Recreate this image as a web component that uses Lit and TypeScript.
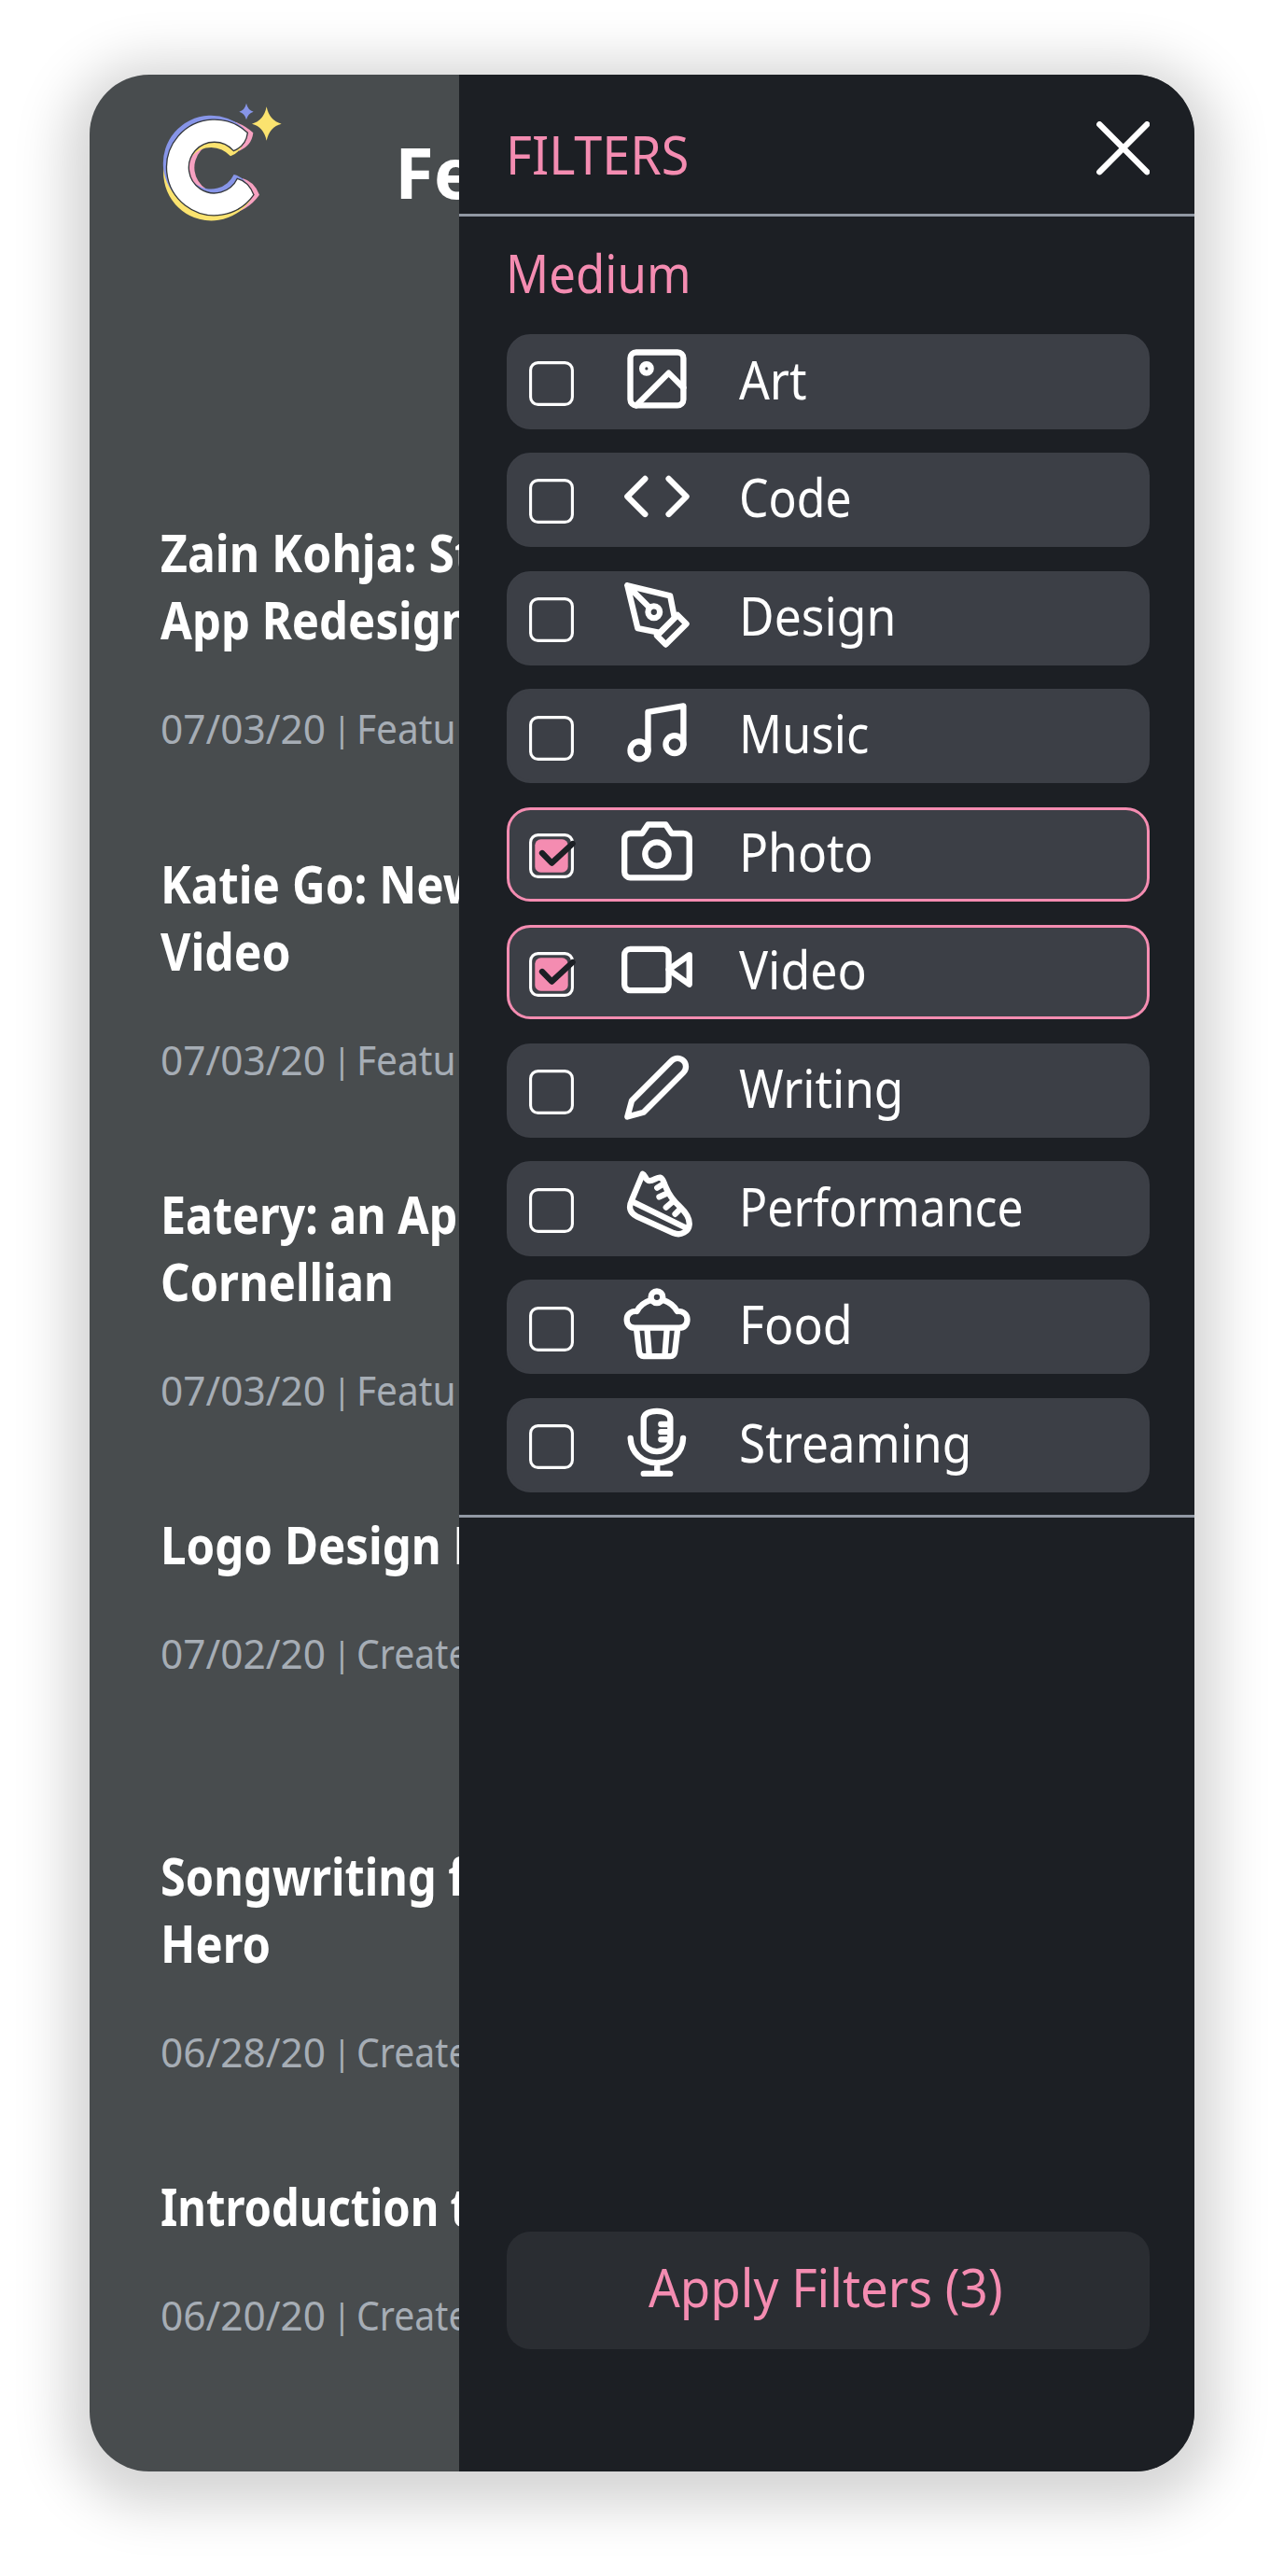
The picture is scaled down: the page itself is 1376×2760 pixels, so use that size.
import { LitElement, html, svg, css } from "lit";
import { customElement, property, state } from "lit/decorators.js";

/** Text condensed so that the ink of `text` spans `ink` pixels; `tail` continues at the same scale. */
@customElement("fit-text")
class FitText extends LitElement {
  @property() text = "";
  @property() tail = "";
  @property({ type: Number }) ink = 0;
  @state() private ratio = 1;
  @state() private full = 0;

  static styles = css`
    :host { display: block; white-space: pre; }
    .box { display: block; }
    .run { display: inline-block; transform-origin: 0 50%; }
  `;

  firstUpdated() {
    const cs = getComputedStyle(this);
    const ctx = document.createElement("canvas").getContext("2d")!;
    ctx.font = `${cs.fontWeight} ${cs.fontSize} ${cs.fontFamily}`;
    const m = ctx.measureText(this.text);
    this.ratio = this.ink / (m.actualBoundingBoxRight + m.actualBoundingBoxLeft);
    this.full = ctx.measureText(this.text + this.tail).width * this.ratio;
  }

  render() {
    return html`<span class="box" style="width:${this.full}px"
      ><span class="run" style="transform:scaleX(${this.ratio})">${this.text}${this.tail}</span></span>`;
  }
}

const icons: Record<string, unknown> = {
  Art: svg`<rect x="3" y="3" width="18" height="18" rx="2"/><circle cx="8.5" cy="8.5" r="1.5"/><path d="M21 15l-5-5L5 21"/>`,
  Code: svg`<path d="M16 18l6-6-6-6M8 6l-6 6 6 6"/>`,
  Design: svg`<path d="M12 19l7-7 3 3-7 7-3-3z"/><path d="M18 13l-1.5-7.5L2 2l3.5 14.5L13 18l5-5zM2 2l7.586 7.586"/><circle cx="11" cy="11" r="2"/>`,
  Music: svg`<path d="M9 18V5l12-2v13"/><circle cx="6" cy="18" r="3"/><circle cx="18" cy="16" r="3"/>`,
  Photo: svg`<path d="M23 19a2 2 0 0 1-2 2H3a2 2 0 0 1-2-2V8a2 2 0 0 1 2-2h4l2-3h6l2 3h4a2 2 0 0 1 2 2z"/><circle cx="12" cy="13" r="4"/>`,
  Video: svg`<path d="M23 7l-7 5 7 5V7z"/><rect x="1" y="5" width="15" height="14" rx="2"/>`,
  Writing: svg`<path d="M17 3a2.828 2.828 0 1 1 4 4L7.500 20.500 2 22l1.500-5.500L17 3z"/>`,
  Performance: svg`<path d="M3.400 10.300L7.200 1.200C8 1.400 8.100 3.400 9.400 3.500C10.800 3.600 12 2.300 13.100 2.400C14.200 2.600 14.300 4.200 15 5.600C16.200 8.600 17.600 10.300 19.800 12.300C21.600 14 23.100 16.400 23 18.300C22.800 20.700 20.200 22.300 17.600 21.200L5.200 15.600C2.900 14.500 2.300 12.500 3.400 10.300zM3.500 10.500L21.500 19.300"/><path d="M14 4.700L12.100 5.900M15.400 7.800L12.800 9M17.200 10.700L15.100 12.500M20 13L18.200 14.800"/>`,
  Food: svg`<circle cx="12" cy="3.100" r="2"/><path d="M9.700 4.200C7.600 4.900 6 6.300 5.200 7.900C3.200 7.800 1.800 8.900 1.800 10.700C1.800 12.500 2.900 13.500 4.500 13.500H19.600C21.200 13.500 22.300 12.500 22.300 10.700C22.300 8.900 20.900 7.800 18.900 7.900C18 6.300 16.500 4.900 14.400 4.200M5.100 14L6 21.600C6.200 22.600 6.600 23.100 7.500 23.100H16.600C17.500 23.100 17.900 22.600 18.100 21.600L19 14M8.700 14L9.400 22.700M15.400 14L14.700 22.700"/>`,
  Streaming: svg`<path d="M7.500 4.300C7.500 2.500 9.500 1.550 12 1.550S16.550 2.500 16.550 4.300V11.600C16.550 13.900 14 15.200 12 15.200S7.500 13.900 7.500 11.600zM13.400 6H16M13.400 8.600H16M13.400 11.150H16M3.050 10.700C3.300 15.700 7 19.100 12 19.100S20.700 15.700 20.900 10.700M12.100 19.100V22.700M7.500 22.750H16.500"/>`,
};

const mediums = [
  { name: "Art", ink: 71.5, on: false },
  { name: "Code", ink: 115.7, on: false },
  { name: "Design", ink: 160.5, on: false },
  { name: "Music", ink: 134, on: false },
  { name: "Photo", ink: 136.5, on: true },
  { name: "Video", ink: 134.3, on: true },
  { name: "Writing", ink: 172.3, on: false },
  { name: "Performance", ink: 298, on: false },
  { name: "Food", ink: 113, on: false },
  { name: "Streaming", ink: 243.3, on: false },
];

interface Run { text: string; tail?: string; ink: number }
const featured: Run = { text: "Featu", ink: 100.3 };
const created: Run = { text: "Creat", tail: "e", ink: 96 };
const posts: { title: Run[]; date: string; kind: Run }[] = [
  { title: [{ text: "Zain Kohja:", tail: " St", ink: 271.3 }, { text: "App Redesig", tail: "n", ink: 297.7 }], date: "07/03/20", kind: featured },
  { title: [{ text: "Katie Go: Ne", tail: "w", ink: 297.3 }, { text: "Video", ink: 138 }], date: "07/03/20", kind: featured },
  { title: [{ text: "Eatery: an A", tail: "p", ink: 283.7 }, { text: "Cornellian", ink: 244.3 }], date: "07/03/20", kind: featured },
  { title: [{ text: "Logo Design", tail: " P", ink: 294.3 }], date: "07/02/20", kind: created },
  { title: [{ text: "Songwriting", tail: " f", ink: 291 }, { text: "Hero", ink: 112 }], date: "06/28/20", kind: created },
  { title: [{ text: "Introduction", tail: " t", ink: 294.6 }], date: "06/20/20", kind: created },
];

const fit = (r: Run) => html`<fit-text .text=${r.text} .tail=${r.tail ?? ""} .ink=${r.ink}></fit-text>`;

const letter = "M557 246A154 154 0 1 0 577 445Q560 402 524 393A82 82 0 1 1 512 304Q552 288 557 246Z";

@customElement("app-root")
class AppRoot extends LitElement {
  static styles = css`
    :host {
      display: block;
      box-sizing: border-box;
      width: 1376px;
      height: 2760px;
      overflow: hidden;
      padding: 80px 96px 112px;
      background: #fff;
      font-family: "Noto Sans", "Open Sans", sans-serif;
    }
    .card {
      display: flex;
      height: 2568px;
      border-radius: 64px;
      background: #484c4e;
      box-shadow: 0 12px 56px 25px rgba(0, 0, 0, 0.17);
    }
    .feed { width: 395.6px; flex: none; overflow: hidden; color: #fff; }
    .top { display: flex; height: 475.3px; }
    .logo { width: 133.33px; height: 133.33px; margin: 26.7px 0 0 77.3px; flex: none; display: block; }
    .heading { margin: 48.6px 0 0 116.2px; font-weight: 700; font-size: 75px; line-height: 110px; }
    .posts { display: grid; grid-auto-rows: 354.4px; padding-left: 75.7px; }
    .title { font-weight: 700; font-size: 56px; line-height: 72px; }
    .meta { display: flex; margin-top: 52px; font-size: 43.4px; line-height: 60px; color: #a6adb5; }
    .date { width: 184.8px; }
    .sep { width: 19.8px; margin-right: 6.1px; font-size: 36px; text-align: center; }

    .panel {
      flex: 1;
      display: flex;
      flex-direction: column;
      box-sizing: border-box;
      padding-bottom: 130.7px;
      border-radius: 0 64px 64px 0;
      background: #1c1f24;
      color: #f48cb1;
      font-size: 56px;
    }
    .bar {
      display: flex;
      justify-content: space-between;
      align-items: flex-start;
      height: 149px;
      padding: 0 47.700px 0 50px;
      border-bottom: 3.2px solid #9198a4;
    }
    .name { margin-top: 47.3px; line-height: 76px; }
    .close { width: 57.5px; height: 57.5px; margin-top: 50.3px; }
    .group { padding: 22px 48.1px 24px 51px; border-bottom: 3.2px solid #9198a4; }
    .label { margin-left: -0.8px; line-height: 76px; }
    .list { display: flex; flex-direction: column; gap: 25.4px; margin-top: 28.4px; }
    .row {
      display: flex;
      align-items: center;
      box-sizing: border-box;
      height: 101.2px;
      padding-left: 21.8px;
      border: 3.2px solid #3c3f46;
      border-radius: 25.3px;
      background: #3c3f46;
      color: #fff;
    }
    .row.on { border-color: #f48cb1; }
    .check { width: 48px; height: 48px; margin-top: 3.8px; overflow: visible; flex: none; }
    .icon {
      width: 75.9px;
      height: 75.9px;
      margin: 0 50.700px 6.6px 50.500px;
      overflow: visible;
      flex: none;
      fill: none;
      stroke: #fff;
      stroke-width: 2;
      stroke-linecap: round;
      stroke-linejoin: round;
    }
    .text { margin-bottom: 6.800px; line-height: 76px; }
    .apply {
      display: flex;
      justify-content: center;
      align-items: center;
      box-sizing: border-box;
      height: 126.6px;
      margin: auto 48.1px 0 51px;
      padding: 0 5px 7.400px 0;
      border-radius: 25.3px;
      background: #2a2d32;
      line-height: 76px;
    }
  `;

  private logo() {
    return html`<svg class="logo" viewBox="280 140 400 400">
      <path d=${letter} transform="translate(18 0)" fill="#f7a1c1"/>
      <path d=${letter} transform="translate(-10 17)" fill="#fbe36f"/>
      <path d=${letter} transform="translate(-11 -13)" fill="#8795e8"/>
      <path d=${letter} fill="#fff" stroke="#35383c" stroke-width="4"/>
      <path d="M553 151Q558 173 576 178Q558 183 553 204Q548 183 530 178Q548 173 553 151Z" fill="#8795e8"/>
      <path d="M618 162Q627 207 666 217Q627 227 618 271Q609 227 571 217Q609 207 618 162Z" fill="#fbe36f"/>
    </svg>`;
  }

  private check(on: boolean) {
    return html`<svg class="check" viewBox="0 0 48 48">
      <rect x="1.600" y="1.600" width="44.800" height="44.800" rx="8" fill="none" stroke="#fff" stroke-width="3.100"/>
      ${on
        ? svg`<rect x="6.300" y="6.300" width="35.400" height="35.400" rx="6.300" fill="#f48cb1"/>
            <path d="M14 21L24.300 31.600L46.600 11" fill="none" stroke="#1c1f24" stroke-width="6.300" stroke-linecap="round" stroke-linejoin="round"/>`
        : ""}
    </svg>`;
  }

  render() {
    return html`<div class="card">
      <section class="feed">
        <header class="top">
          ${this.logo()}
          <div class="heading">${fit({ text: "F", tail: "e", ink: 32.5 })}</div>
        </header>
        <div class="posts">
          ${posts.map((p) => html`<article>
            <div class="title">${p.title.map(fit)}</div>
            <div class="meta">
              <div class="date">${fit({ text: p.date, ink: 173.4 })}</div>
              <div class="sep">|</div>
              ${fit(p.kind)}
            </div>
          </article>`)}
        </div>
      </section>
      <aside class="panel">
        <div class="bar">
          <div class="name">${fit({ text: "FILTERS", ink: 189.8 })}</div>
          <svg class="close" viewBox="0 0 57.5 57.5"><path d="M3.300 3.300L54.200 54.200M54.200 3.300L3.300 54.200" stroke="#fff" stroke-width="6.300" stroke-linecap="round"/></svg>
        </div>
        <div class="group">
          <div class="label">${fit({ text: "Medium", ink: 190 })}</div>
          <div class="list">
            ${mediums.map((m) => html`<div class="row ${m.on ? "on" : ""}">
              ${this.check(m.on)}
              <svg class="icon" viewBox="0 0 24 24">${icons[m.name]}</svg>
              <div class="text">${fit({ text: m.name, ink: m.ink })}</div>
            </div>`)}
          </div>
        </div>
        <div class="apply">${fit({ text: "Apply Filters (3)", ink: 378 })}</div>
      </aside>
    </div>`;
  }
}
